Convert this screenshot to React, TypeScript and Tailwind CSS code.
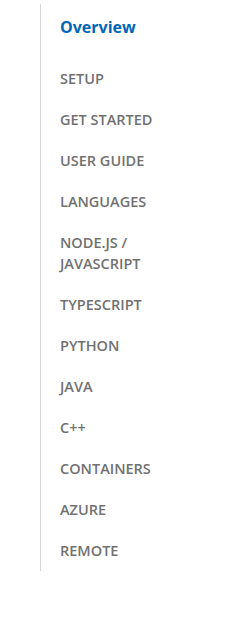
const items = [
  'Setup',
  'Get Started',
  'User Guide',
  'Languages',
  'Node.js / JavaScript',
  'TypeScript',
  'Python',
  'Java',
  'C++',
  'Containers',
  'Azure',
  'Remote',
]

export default function App() {
  return (
    <div className="w-[252px] h-[638px] bg-white font-['Open_Sans',sans-serif]">
      <nav className="ml-[40px] mt-[4px] w-[170px] border-l border-[#d6d6d6] pl-[19px] pt-[11px] pb-[10px]">
        <a className="block text-[16px] leading-[24px] font-bold text-[#0066b8]">Overview</a>
        <ul className="mt-[29px] flex flex-col gap-[20px]">
          {items.map((item) => (
            <li
              key={item}
              className="text-[14.5px] leading-[21px] font-semibold uppercase text-[#717171] pr-[40px]"
            >
              {item}
            </li>
          ))}
        </ul>
      </nav>
    </div>
  )
}
